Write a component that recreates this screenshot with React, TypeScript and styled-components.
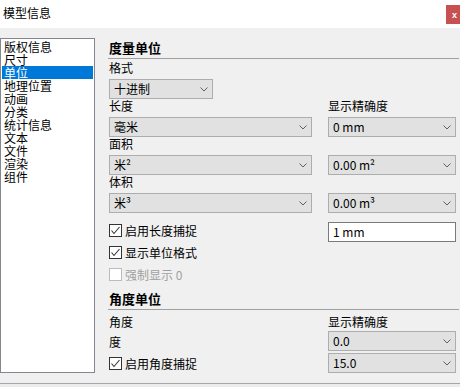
import React from 'react';
import styled, { createGlobalStyle } from 'styled-components';

const GlobalStyle = createGlobalStyle`
  html, body {
    margin: 0;
    padding: 0;
    background: #ffffff;
  }
  * {
    box-sizing: border-box;
  }
`;

const Window = styled.div`
  width: 460px;
  height: 387px;
  overflow: hidden;
  font-family: 'Noto Sans CJK SC', 'Noto Sans', sans-serif;
  font-size: 12px;
  color: #000;
  background: #f0f0f0;
  display: flex;
  flex-direction: column;
`;

const TitleBar = styled.div`
  height: 28px;
  flex: none;
  background: #ffffff;
  display: flex;
  justify-content: space-between;
  align-items: flex-start;
`;

const Title = styled.div`
  margin: 5px 0 0 3px;
  line-height: 15px;
  font-size: 12px;
`;

const CloseButton = styled.div`
  margin-top: 5px;
  width: 14px;
  height: 19px;
  background: #c75050;
  color: #fff;
  font-family: 'Liberation Sans', sans-serif;
  font-weight: bold;
  font-size: 9px;
  display: flex;
  align-items: center;
  justify-content: center;
  padding-left: 3px;
`;

const Body = styled.div`
  height: 355px;
  flex: none;
  display: grid;
  grid-template-columns: 95px 351px;
  column-gap: 13px;
  align-items: start;
  padding: 10px 0;
`;

const NavList = styled.ul`
  margin: 0;
  height: 335px;
  list-style: none;
  padding: 1px;
  background: #fff;
  border: 1px solid #828790;
`;

const NavItem = styled.li<{ $active?: boolean }>`
  height: 13px;
  line-height: 13px;
  padding-left: 2px;
  white-space: nowrap;
  background: ${p => (p.$active ? '#0078d7' : 'transparent')};
  color: ${p => (p.$active ? '#fff' : '#000')};
`;

const Panel = styled.div`
  margin-top: 2px;
  display: flex;
  flex-direction: column;
`;

const SectionHeader = styled.div<{ $gap?: number }>`
  margin-top: ${p => p.$gap ?? 0}px;
  padding: 0 0 2px 1px;
  font-size: 13px;
  font-weight: bold;
  line-height: 16px;
  border-bottom: 1px solid #a0a0a0;
`;

const Fields = styled.div<{ $gap?: number }>`
  margin-top: ${p => p.$gap ?? 0}px;
  padding-left: 1px;
  display: grid;
  grid-template-columns: 203px 128px;
  column-gap: 16px;
`;

const FieldLabel = styled.div<{ $h?: number }>`
  height: ${p => p.$h ?? 18}px;
  line-height: 14px;
  white-space: nowrap;
`;

const PlainValue = styled.div`
  height: 20px;
  display: flex;
  align-items: center;
`;

const SelectBox = styled.div<{ $width?: number }>`
  width: ${p => (p.$width ? `${p.$width}px` : '100%')};
  height: 20px;
  background: #e1e1e1;
  border: 1px solid #adadad;
  display: flex;
  align-items: center;
  justify-content: space-between;
  padding: 0 4px 0 4px;
  line-height: 14px;
  white-space: nowrap;
`;

const TextBox = styled.div`
  height: 20px;
  background: #fff;
  border: 1px solid #7a7a7a;
  display: flex;
  align-items: center;
  padding-left: 4px;
  line-height: 14px;
`;

const CheckRow = styled.div<{ $disabled?: boolean }>`
  height: 22px;
  display: flex;
  align-items: flex-start;
  padding-top: 2px;
  gap: 3px;
  line-height: 13px;
  color: ${p => (p.$disabled ? '#a0a0a0' : '#000')};
`;

const CenterCheckRow = styled(CheckRow)`
  height: 20px;
  padding-top: 0;
  align-items: center;
`;

const Box = styled.span<{ $disabled?: boolean }>`
  width: 13px;
  height: 13px;
  flex: none;
  background: #fff;
  border: 1px solid ${p => (p.$disabled ? '#bcbcbc' : '#333')};
  display: flex;
  align-items: center;
  justify-content: center;
`;

const RowGap = styled.div`
  grid-column: 1 / span 2;
  height: 2px;
`;

const Backdrop = styled.div`
  flex: 1;
  background: #ececec;
  border-top: 1px solid #a6a6a6;
`;

const Chevron = () => (
  <svg width='8' height='5' viewBox='0 0 8 5'>
    <polyline points='0.5,0.5 4,4 7.5,0.5' fill='none' stroke='#606060' strokeWidth='1' />
  </svg>
);

const Select: React.FC<{ value: string; width?: number }> = ({ value, width }) => (
  <SelectBox $width={width}>
    <span>{value}</span>
    <Chevron />
  </SelectBox>
);

const Checkbox: React.FC<{ checked?: boolean; disabled?: boolean }> = ({ checked, disabled }) => (
  <Box $disabled={disabled}>
    {checked && (
      <svg width='11' height='11' viewBox='0 0 11 11'>
        <polyline points='1.5,5.5 4,8.5 9.5,2' fill='none' stroke='#333' strokeWidth='1.1' />
      </svg>
    )}
  </Box>
);

const navItems = ['版权信息', '尺寸', '单位', '地理位置', '动画', '分类', '统计信息', '文本', '文件', '渲染', '组件'];

export default function App() {
  return (
    <Window>
      <GlobalStyle />
      <TitleBar>
        <Title>模型信息</Title>
        <CloseButton>x</CloseButton>
      </TitleBar>
      <Body>
        <NavList>
          {navItems.map(item => (
            <NavItem key={item} $active={item === '单位'}>
              {item}
            </NavItem>
          ))}
        </NavList>
        <Panel>
          <SectionHeader>度量单位</SectionHeader>
          <Fields $gap={2}>
            <FieldLabel>格式</FieldLabel>
            <FieldLabel />
            <Select value='十进制' width={104} />
            <div />
            <FieldLabel>长度</FieldLabel>
            <FieldLabel>显示精确度</FieldLabel>
            <Select value='毫米' />
            <Select value='0 mm' />
            <FieldLabel>面积</FieldLabel>
            <FieldLabel />
            <Select value='米²' />
            <Select value='0.00 m²' />
            <FieldLabel>体积</FieldLabel>
            <FieldLabel />
            <Select value='米³' />
            <Select value='0.00 m³' />
          </Fields>
          <Fields $gap={9}>
            <CheckRow>
              <Checkbox checked />
              启用长度捕捉
            </CheckRow>
            <TextBox>1 mm</TextBox>
            <CheckRow>
              <Checkbox checked />
              显示单位格式
            </CheckRow>
            <div />
            <CheckRow $disabled>
              <Checkbox disabled />
              强制显示 0
            </CheckRow>
            <div />
          </Fields>
          <SectionHeader $gap={3}>角度单位</SectionHeader>
          <Fields $gap={5}>
            <FieldLabel $h={16}>角度</FieldLabel>
            <FieldLabel $h={16}>显示精确度</FieldLabel>
            <PlainValue>度</PlainValue>
            <Select value='0.0' />
            <RowGap />
            <CenterCheckRow>
              <Checkbox checked />
              启用角度捕捉
            </CenterCheckRow>
            <Select value='15.0' />
          </Fields>
        </Panel>
      </Body>
      <Backdrop>
        <svg width='460' height='4' viewBox='0 0 460 4'>
          <g stroke='#111' strokeWidth='1.2'>
            <line x1='50' y1='0' x2='50' y2='4' />
            <line x1='63' y1='1' x2='62' y2='4' />
            <line x1='91' y1='0' x2='91' y2='4' />
            <path d='M165 4 Q180 0 195 1' fill='none' />
            <line x1='222' y1='0' x2='222' y2='4' />
            <line x1='253' y1='0' x2='253' y2='4' />
            <line x1='283' y1='0' x2='283' y2='4' />
            <line x1='316' y1='0' x2='316' y2='4' />
            <line x1='345' y1='0' x2='345' y2='4' />
            <line x1='373' y1='0' x2='373' y2='4' />
          </g>
        </svg>
      </Backdrop>
    </Window>
  );
}
